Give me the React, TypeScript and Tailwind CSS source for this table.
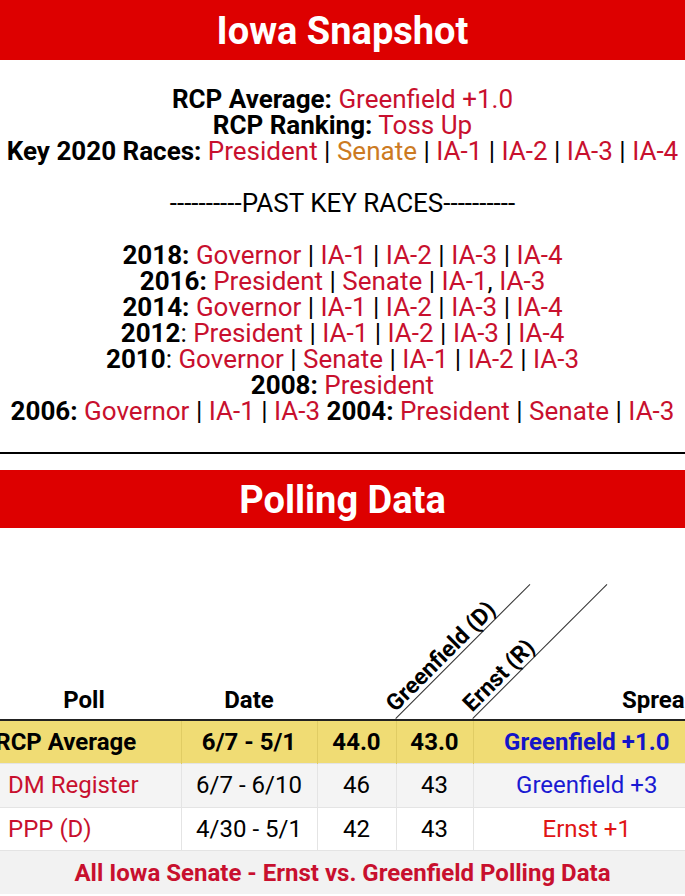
import React from "react";

const R = ({ children }: { children: React.ReactNode }) => (
  <span className="text-[#c8102e]">{children}</span>
);
const B = ({ children }: { children: React.ReactNode }) => (
  <span className="font-bold">{children}</span>
);
const S = () => <span> | </span>;

function Diag({ label }: { label: string }) {
  return (
    <div className="absolute left-full bottom-0 h-0 w-0">
      <div className="absolute left-0 bottom-0 w-[190px] origin-bottom-left -rotate-45 border-b border-[#333]">
        <span className="block pl-[4px] text-left text-[23px] leading-[22px] font-bold text-black whitespace-nowrap">
          {label}
        </span>
      </div>
    </div>
  );
}

export default function App() {
  return (
    <div
      className="w-[685px] h-[896px] overflow-hidden bg-white text-black"
      style={{ fontFamily: "Roboto, 'Liberation Sans', sans-serif" }}
    >
      <div className="h-[60px] bg-[#dd0000] flex items-center justify-center pt-[2px]">
        <h1 className="text-white font-bold text-[38px] leading-none">Iowa Snapshot</h1>
      </div>

      <div className="pt-[26px] text-center text-[26px] leading-[26px] whitespace-nowrap">
        <div>
          <B>RCP Average:</B> <R>Greenfield +1.0</R>
        </div>
        <div>
          <B>RCP Ranking:</B> <R>Toss Up</R>
        </div>
        <div>
          <B>Key 2020 Races:</B> <R>President</R>
          <S />
          <span className="text-[#cc7a22]">Senate</span>
          <S />
          <R>IA-1</R>
          <S />
          <R>IA-2</R>
          <S />
          <R>IA-3</R>
          <S />
          <R>IA-4</R>
        </div>
        <div className="h-[26px]" />
        <div>----------PAST KEY RACES----------</div>
        <div className="h-[26px]" />
        <div>
          <B>2018:</B> <R>Governor</R>
          <S />
          <R>IA-1</R>
          <S />
          <R>IA-2</R>
          <S />
          <R>IA-3</R>
          <S />
          <R>IA-4</R>
        </div>
        <div>
          <B>2016:</B> <R>President</R>
          <S />
          <R>Senate</R>
          <S />
          <R>IA-1</R>, <R>IA-3</R>
        </div>
        <div>
          <B>2014:</B> <R>Governor</R>
          <S />
          <R>IA-1</R>
          <S />
          <R>IA-2</R>
          <S />
          <R>IA-3</R>
          <S />
          <R>IA-4</R>
        </div>
        <div>
          <B>2012</B>: <R>President</R>
          <S />
          <R>IA-1</R>
          <S />
          <R>IA-2</R>
          <S />
          <R>IA-3</R>
          <S />
          <R>IA-4</R>
        </div>
        <div>
          <B>2010</B>: <R>Governor</R>
          <S />
          <R>Senate</R>
          <S />
          <R>IA-1</R>
          <S />
          <R>IA-2</R>
          <S />
          <R>IA-3</R>
        </div>
        <div>
          <B>2008:</B> <R>President</R>
        </div>
        <div>
          <B>2006:</B> <R>Governor</R>
          <S />
          <R>IA-1</R>
          <S />
          <R>IA-3</R> <B>2004:</B> <R>President</R>
          <S />
          <R>Senate</R>
          <S />
          <R>IA-3</R>
        </div>
      </div>

      <div className="mt-[28px] h-[2px] bg-black" />

      <div className="mt-[16px] h-[58px] bg-[#dd0000] flex items-center justify-center pt-[2px]">
        <h2 className="text-white font-bold text-[38px] leading-none">Polling Data</h2>
      </div>

      <div className="overflow-hidden">
        <table className="ml-[-49px] w-[749px] border-collapse table-fixed text-[24px]">
          <colgroup>
            <col className="w-[230px]" />
            <col className="w-[136px]" />
            <col className="w-[79px]" />
            <col className="w-[77px]" />
            <col className="w-[227px]" />
          </colgroup>
          <thead>
            <tr className="h-[192px] border-b-2 border-[#222]">
              <th className="align-bottom pb-[6px] pl-[36px] text-center text-[24px] leading-[26px] font-bold">Poll</th>
              <th className="align-bottom pb-[6px] text-center text-[24px] leading-[26px] font-bold">Date</th>
              <th className="align-bottom p-0">
                <div className="relative h-0">
                  <Diag label="Greenfield (D)" />
                </div>
              </th>
              <th className="align-bottom p-0">
                <div className="relative h-0">
                  <Diag label="Ernst (R)" />
                </div>
              </th>
              <th className="align-bottom pb-[6px] pl-[149px] text-left text-[24px] leading-[26px] font-bold whitespace-nowrap">
                Spread
              </th>
            </tr>
          </thead>
          <tbody>
            <tr className="h-[43px] bg-[#f0dc74] font-bold">
              <td className="text-center whitespace-nowrap border-r border-[#e0cc64]">RCP Average</td>
              <td className="text-center whitespace-nowrap border-r border-[#e0cc64]">6/7 - 5/1</td>
              <td className="text-center border-r border-[#e0cc64]">44.0</td>
              <td className="text-center border-r border-[#e0cc64]">43.0</td>
              <td className="text-center whitespace-nowrap text-[#1414c8]">Greenfield +1.0</td>
            </tr>
            <tr className="h-[44px] bg-[#f4f4f4] border-t border-[#e4e4e4]">
              <td className="pl-[57px] text-left whitespace-nowrap text-[#c8102e] border-r border-[#e4e4e4]">DM Register</td>
              <td className="text-center whitespace-nowrap border-r border-[#e4e4e4]">6/7 - 6/10</td>
              <td className="text-center border-r border-[#e4e4e4]">46</td>
              <td className="text-center border-r border-[#e4e4e4]">43</td>
              <td className="text-center whitespace-nowrap text-[#1a1ad2]">Greenfield +3</td>
            </tr>
            <tr className="h-[43px] bg-white border-t border-[#e4e4e4]">
              <td className="pl-[57px] text-left whitespace-nowrap text-[#c8102e] border-r border-[#e4e4e4]">PPP (D)</td>
              <td className="text-center whitespace-nowrap border-r border-[#e4e4e4]">4/30 - 5/1</td>
              <td className="text-center border-r border-[#e4e4e4]">42</td>
              <td className="text-center border-r border-[#e4e4e4]">43</td>
              <td className="text-center whitespace-nowrap text-[#e01515]">Ernst +1</td>
            </tr>
          </tbody>
        </table>
        <div className="h-[44px] bg-[#f2f2f2] border-t border-[#e4e4e4] flex items-center justify-center">
          <span className="text-[#c8102e] font-bold text-[24px]">
            All Iowa Senate - Ernst vs. Greenfield Polling Data
          </span>
        </div>
      </div>
    </div>
  );
}
